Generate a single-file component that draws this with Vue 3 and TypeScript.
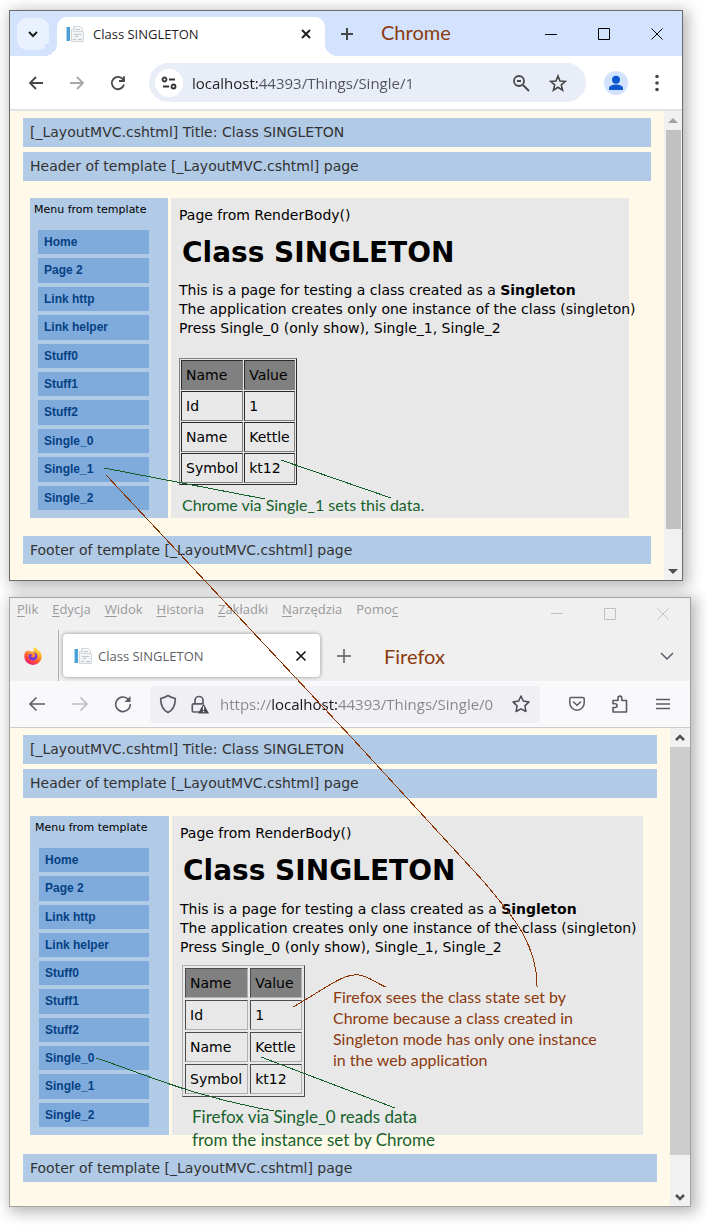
<script setup lang="ts">
import { ref } from 'vue'

interface BrowserWindow {
  kind: 'chrome' | 'firefox'
  note: string[]
}

const windows: BrowserWindow[] = [
  { kind: 'chrome', note: ['Chrome via Single_1 sets this data.'] },
  { kind: 'firefox', note: ['Firefox via Single_0 reads data', 'from the instance set by Chrome'] },
]

const menuLinks: string[] = [
  'Home', 'Page 2', 'Link http', 'Link helper', 'Stuff0',
  'Stuff1', 'Stuff2', 'Single_0', 'Single_1', 'Single_2',
]

const rows: [string, string][] = [
  ['Id', '1'],
  ['Name', 'Kettle'],
  ['Symbol', 'kt12'],
]

// Each entry: text before the access key, the access key, text after it.
const menuBar: [string, string, string][] = [
  ['', 'P', 'lik'], ['', 'E', 'dycja'], ['', 'W', 'idok'], ['', 'H', 'istoria'],
  ['', 'Z', 'akładki'], ['', 'N', 'arzędzia'], ['Pomo', 'c', ''],
]

const chromeUrl = ref('localhost:44393/Things/Single/1')
const firefoxUrl = ref('https://localhost:44393/Things/Single/0')
</script>

<template>
  <main class="board">
    <section v-for="win in windows" :key="win.kind" class="window" :class="win.kind">
      <header v-if="win.kind === 'chrome'">
        <div class="c-tabs">
          <button class="c-search" aria-label="Search tabs">
            <svg width="12" height="12" viewBox="0 0 12 12"><path d="M2 4l4 4 4-4" fill="none" stroke="#1f1f1f" stroke-width="2" /></svg>
          </button>
          <div class="c-tab">
            <svg class="favicon" width="18" height="18" viewBox="0 0 18 18">
              <path d="M7.500 1.500h7l2 2v3h-9z" fill="#f4f6f8" stroke="#d3d9df" />
              <path d="M5.500 4.500h3v-3M7.500 6.500h10v10h-12v-12" fill="#f1f3f5" stroke="#d0d6dc" />
              <path d="M10 4.500h4M8 9.500h7M9 11.500h3M7 14.500h3M12 14.500h4" stroke="#bac4ce" />
              <rect x="1" y="2" width="3" height="14" fill="#4a9fd8" />
              <path d="M.5 2v14" stroke="#a9d2ee" />
            </svg>
            <span>Class SINGLETON</span>
            <button class="icon" aria-label="Close tab">
              <svg width="12" height="12" viewBox="0 0 12 12"><path d="M2 2l8 8M10 2l-8 8" stroke="#1f1f1f" stroke-width="2" /></svg>
            </button>
          </div>
          <button class="icon new-tab" aria-label="New tab">
            <svg width="14" height="14" viewBox="0 0 14 14"><path d="M7 1v12M1 7h12" stroke="#474747" stroke-width="2" /></svg>
          </button>
          <span class="caption">Chrome</span>
          <div class="controls">
            <button class="icon" aria-label="Minimize"><svg width="12" height="12" viewBox="0 0 12 12"><path d="M0 6.500h12" stroke="#000" /></svg></button>
            <button class="icon" aria-label="Maximize"><svg width="12" height="12" viewBox="0 0 12 12"><path d="M.5 .5h11v11H.5z" fill="none" stroke="#000" /></svg></button>
            <button class="icon" aria-label="Close"><svg width="12" height="12" viewBox="0 0 12 12"><path d="M.5 .5l11 11M11.500 .5l-11 11" stroke="#000" /></svg></button>
          </div>
        </div>
        <div class="toolbar c-toolbar">
          <button class="icon" aria-label="Back">
            <svg width="16" height="16" viewBox="0 0 16 16"><path d="M15 8H2M8 2L2 8l6 6" fill="none" stroke="#474747" stroke-width="1.800" /></svg>
          </button>
          <button class="icon" aria-label="Forward">
            <svg width="16" height="16" viewBox="0 0 16 16"><path d="M1 8h13M8 2l6 6-6 6" fill="none" stroke="#a8a8a8" stroke-width="1.800" /></svg>
          </button>
          <button class="icon" aria-label="Reload">
            <svg width="16" height="16" viewBox="0 0 16 16"><path d="M13.200 4.600A6.200 6.200 0 1 0 14 9.600M14 1.200V6H9" fill="none" stroke="#474747" stroke-width="1.800" /></svg>
          </button>
          <div class="address">
            <button class="site" aria-label="Site information">
              <svg width="16" height="14" viewBox="0 0 16 14" fill="none" stroke="#333" stroke-width="1.800"><circle cx="3.500" cy="3.500" r="2" /><path d="M8 3.500h6M2 10.500h6" /><circle cx="12.500" cy="10.500" r="2" /></svg>
            </button>
            <input v-model="chromeUrl" class="url" aria-label="Address" />
            <button class="icon" aria-label="Zoom">
              <svg width="18" height="18" viewBox="0 0 18 18" fill="none" stroke="#474747" stroke-width="1.800"><circle cx="7" cy="7" r="5" /><path d="M11 11l6 6M5 7h4" /></svg>
            </button>
            <button class="icon" aria-label="Bookmark">
              <svg width="18" height="18" viewBox="0 0 18 18"><path d="M9 2l2 5 5.400.4-4.100 3.500 1.300 5.300L9 13.300l-4.600 2.900 1.300-5.300L1.600 7.400 7 7z" fill="none" stroke="#474747" stroke-width="1.600" /></svg>
            </button>
          </div>
          <button class="icon" aria-label="Profile">
            <svg width="24" height="24" viewBox="0 0 24 24"><circle cx="12" cy="12" r="12" fill="#d3e3fd" /><circle cx="12" cy="8.700" r="4" fill="#0b57d0" /><path d="M5 19v-2c0-2 4-3.500 7-3.500s7 1.500 7 3.500v2z" fill="#0b57d0" /></svg>
          </button>
          <button class="icon" aria-label="Menu">
            <svg width="4" height="18" viewBox="0 0 4 18" fill="#474747"><circle cx="2" cy="2.500" r="1.800" /><circle cx="2" cy="9" r="1.800" /><circle cx="2" cy="15.500" r="1.800" /></svg>
          </button>
        </div>
      </header>

      <header v-else>
        <div class="f-menu">
          <nav>
            <button v-for="item in menuBar" :key="item.join('')">{{ item[0] }}<u>{{ item[1] }}</u>{{ item[2] }}</button>
          </nav>
          <div class="controls">
            <button class="icon" aria-label="Minimize"><svg width="12" height="12" viewBox="0 0 12 12"><path d="M0 5.500h12" stroke="#c0c0c0" /></svg></button>
            <button class="icon" aria-label="Maximize"><svg width="12" height="12" viewBox="0 0 12 12"><path d="M.5 .5h11v11H.5z" fill="none" stroke="#c0c0c0" /></svg></button>
            <button class="icon" aria-label="Close"><svg width="12" height="12" viewBox="0 0 12 12"><path d="M.5 .5l11 11M11.500 .5l-11 11" stroke="#c0c0c0" /></svg></button>
          </div>
        </div>
        <div class="f-tabs">
          <button class="logo" aria-label="Firefox View">
            <svg width="18" height="18" viewBox="0 0 18 18">
              <defs>
                <linearGradient id="flame" x1="0.8" y1="0" x2="0.25" y2="1">
                  <stop offset="0" stop-color="#fff44f" /><stop offset=".4" stop-color="#ffa02b" /><stop offset=".7" stop-color="#ff4a3d" /><stop offset="1" stop-color="#e41a72" />
                </linearGradient>
              </defs>
              <path d="M10.500 0c2.200 1 3 2.300 3.500 3.800l1.500.3c1.500 1.500 2.200 3.400 2.200 5.400A8.700 8.400 0 0 1 .3 9.500C.2 7.200 1 5 2.500 3.500l.4 1.300L4.600 3l.7 1.600c2-.6 3.400-.3 4.400.3-.2-1.800 0-3.500.8-4.900z" fill="url(#flame)" />
              <path d="M9 5.200c2.700 0 4.300 1.800 4.300 4.100S11.400 13.500 9 13.500s-4.200-1.700-4.200-3.900c0-1 .4-1.900 1-2.500 1.100 0 1.700.5 2.900.5-.7 1-1.500 1.200-2 1.600.7 1.500 2.800 1.500 4.100.5C12 8.500 10.800 6 9 5.200z" fill="#7139d7" />
            </svg>
          </button>
          <div class="f-tab">
            <svg class="favicon" width="18" height="18" viewBox="0 0 18 18">
              <path d="M7.500 1.500h7l2 2v3h-9z" fill="#f4f6f8" stroke="#d3d9df" />
              <path d="M5.500 4.500h3v-3M7.500 6.500h10v10h-12v-12" fill="#f1f3f5" stroke="#d0d6dc" />
              <path d="M10 4.500h4M8 9.500h7M9 11.500h3M7 14.500h3M12 14.500h4" stroke="#bac4ce" />
              <rect x="1" y="2" width="3" height="14" fill="#4a9fd8" />
              <path d="M.5 2v14" stroke="#a9d2ee" />
            </svg>
            <span>Class SINGLETON</span>
            <button class="icon" aria-label="Close tab">
              <svg width="12" height="12" viewBox="0 0 12 12"><path d="M1.500 1.500l9 9M10.500 1.500l-9 9" stroke="#15141a" stroke-width="1.600" /></svg>
            </button>
          </div>
          <button class="icon new-tab" aria-label="New tab">
            <svg width="14" height="14" viewBox="0 0 14 14"><path d="M7 0v14M0 7h14" stroke="#5b5b66" stroke-width="1.500" /></svg>
          </button>
          <span class="caption">Firefox</span>
          <button class="icon all-tabs" aria-label="List all tabs">
            <svg width="14" height="14" viewBox="0 0 14 14"><path d="M1 4l6 6 6-6" fill="none" stroke="#5b5b66" stroke-width="1.500" /></svg>
          </button>
        </div>
        <div class="toolbar f-toolbar">
          <button class="icon" aria-label="Back">
            <svg width="18" height="16" viewBox="0 0 18 16"><path d="M17 8H2M8.500 1.500L2 8l6.500 6.500" fill="none" stroke="#5b5b66" stroke-width="1.600" /></svg>
          </button>
          <button class="icon" aria-label="Forward">
            <svg width="18" height="16" viewBox="0 0 18 16"><path d="M1 8h15M9.500 1.500L16 8l-6.500 6.500" fill="none" stroke="#bcbcc2" stroke-width="1.600" /></svg>
          </button>
          <button class="icon" aria-label="Reload">
            <svg width="18" height="18" viewBox="0 0 18 18"><path d="M14.500 4.500A7.300 7.300 0 1 0 16.300 9" fill="none" stroke="#5b5b66" stroke-width="1.600" /><path d="M16.500 1v6h-6z" fill="#5b5b66" /></svg>
          </button>
          <div class="address">
            <button class="icon" aria-label="Tracking protection">
              <svg width="18" height="20" viewBox="0 0 18 20"><path d="M9 1.500c2.500 1.700 4.500 2.500 7.300 3C16.300 11 14 16 9 18.500 4 16 1.700 11 1.700 4.500c2.800-.5 4.800-1.300 7.300-3z" fill="none" stroke="#5b5b66" stroke-width="1.700" /></svg>
            </button>
            <button class="icon" aria-label="Connection security">
              <svg width="18" height="19" viewBox="0 0 18 19"><path d="M4 9V5.500a4 4 0 0 1 8 0V9M8 17H2.500A1.200 1.200 0 0 1 1.300 15.800V10A1.200 1.200 0 0 1 2.500 8.800h9" fill="none" stroke="#5b5b66" stroke-width="1.700" /><path d="M12.500 8.500L18 18.500H7z" fill="#4a4a55" /><path d="M12.500 11.500v3.500M12.500 16v1.300" stroke="#fff" stroke-width="1.200" /></svg>
            </button>
            <input v-model="firefoxUrl" class="url" aria-label="Address" />
            <button class="icon" aria-label="Bookmark">
              <svg width="20" height="20" viewBox="0 0 20 20"><path d="M10 2l2.400 5.100 5.600.8-4.100 4 1 5.600-4.900-2.700-4.900 2.700 1-5.600L2 7.900l5.600-.8z" fill="none" stroke="#4a4a55" stroke-width="1.500" stroke-linejoin="round" /></svg>
            </button>
          </div>
          <button class="icon" aria-label="Pocket">
            <svg width="16" height="16" viewBox="0 0 16 16"><path d="M2 1.500h12q1.200 0 1.200 1.200V7a7.200 7.200 0 0 1-14.400 0V2.700Q.8 1.500 2 1.500zM4.500 6L8 9.300 11.500 6" fill="none" stroke="#5b5b66" stroke-width="1.500" stroke-linecap="round" /></svg>
          </button>
          <button class="icon" aria-label="Extensions">
            <svg width="18" height="18" viewBox="0 0 18 18"><path d="M2 17h13.500V5.500H10.800V3A1.900 1.900 0 0 0 7 3v2.500H2v3.200h2.200a1.900 1.900 0 0 1 0 3.800H2z" fill="none" stroke="#5b5b66" stroke-width="1.600" stroke-linejoin="round" /></svg>
          </button>
          <button class="icon" aria-label="Menu">
            <svg width="14" height="12" viewBox="0 0 14 12"><path d="M0 1.500h14M0 6h14M0 10.500h14" stroke="#5b5b66" stroke-width="1.400" /></svg>
          </button>
        </div>
      </header>

      <div class="viewport">
        <div class="page">
          <p class="bar">[_LayoutMVC.cshtml] Title: Class SINGLETON</p>
          <p class="bar">Header of template [_LayoutMVC.cshtml] page</p>
          <div class="columns">
            <nav class="menu">
              <p>Menu from template</p>
              <ul>
                <li v-for="link in menuLinks" :key="link"><a href="#">{{ link }}</a></li>
              </ul>
            </nav>
            <article class="body">
              <p>Page from RenderBody()</p>
              <h1>Class SINGLETON</h1>
              <p class="intro">
                This is a page for testing a class created as a <b>Singleton</b><br />
                The application creates only one instance of the class (singleton)<br />
                Press Single_0 (only show), Single_1, Single_2
              </p>
              <table>
                <thead>
                  <tr><th>Name</th><th>Value</th></tr>
                </thead>
                <tbody>
                  <tr v-for="row in rows" :key="row[0]"><td>{{ row[0] }}</td><td>{{ row[1] }}</td></tr>
                </tbody>
              </table>
              <p class="note green"><template v-for="line in win.note" :key="line">{{ line }}<br /></template></p>
              <p v-if="win.kind === 'firefox'" class="note brown">
                Firefox sees the class state set by<br />Chrome because a class created in<br />Singleton mode has only one instance<br />in the web application
              </p>
            </article>
          </div>
          <p class="bar">Footer of template [_LayoutMVC.cshtml] page</p>
        </div>
        <div class="scroll" aria-hidden="true">
          <svg class="arrow" width="10" height="10" viewBox="0 0 10 10">
            <path v-if="win.kind === 'chrome'" d="M0 7l5-5 5 5z" fill="#a3a3a3" />
            <path v-else d="M1 7l4-4 4 4" fill="none" stroke="#505050" stroke-width="2.500" />
          </svg>
          <div class="thumb"></div>
          <div class="track"></div>
          <svg class="arrow" width="10" height="10" viewBox="0 0 10 10">
            <path v-if="win.kind === 'chrome'" d="M0 3l5 5 5-5z" fill="#505050" />
            <path v-else d="M1 3l4 4 4-4" fill="none" stroke="#505050" stroke-width="2.500" />
          </svg>
        </div>
      </div>
    </section>

    <svg class="lines" width="707" height="1225" viewBox="0 0 707 1225" fill="none" shape-rendering="crispEdges" aria-hidden="true">
      <g stroke="#0f5f26">
        <path d="M104 468L265 499M281 460L391 498" />
        <path d="M96 1058C145 1074 190 1096 274 1111M261 1057L395 1108" />
      </g>
      <g stroke="#8a3200">
        <path d="M106 475L352 738L484 882C505 908 538 940 537 988" />
        <path d="M293 1007C325 989 343 973 359 975C369 976 377 984 386 987" />
      </g>
    </svg>
  </main>
</template>

<style>
body {
  margin: 0;
  background: #fff;
}
</style>

<style scoped>
.board {
  position: relative;
  overflow: hidden;
  padding: 10px 16px 18px 9px;
  font-family: "DejaVu Sans", Verdana, sans-serif;
  font-size: 14px;
  color: #000;
}
p, h1, ul { margin: 0; padding: 0; }
button {
  border: 0;
  padding: 0;
  background: none;
  color: inherit;
  font: inherit;
}
svg { display: block; flex: none; }
.window {
  border: 1px solid #6b6b6b;
  background: #fff;
  box-shadow: 3px 3px 14px 2px rgba(0, 0, 0, 0.3);
}
.chrome { margin: 0 8px 16px 0; }
.firefox { border-color: #a3a3a3; background: #f0f0f0; }
.icon {
  display: flex;
  flex: none;
  align-items: center;
  justify-content: center;
  width: 32px;
  height: 32px;
}
.controls { display: flex; margin-left: auto; gap: 21px; }
.caption {
  font: 20px/28px Lato, Carlito, sans-serif;
  color: #8b3a0e;
}
.toolbar { display: flex; align-items: center; box-sizing: border-box; }
.address { display: flex; flex: 1; align-items: center; min-width: 0; }
.url {
  flex: 1;
  min-width: 0;
  border: 0;
  padding: 0;
  outline: 0;
  font: 15px/22px "Open Sans", "Noto Sans", sans-serif;
  color: transparent;
  background-clip: text;
  -webkit-background-clip: text;
}

/* Chrome frame */
.c-tabs {
  display: flex;
  align-items: center;
  height: 45px;
  padding: 0 9px 0 7px;
  background: #d3e3fd;
}
.c-tabs .caption { padding-bottom: 4px; }
.c-search {
  display: flex;
  align-items: center;
  justify-content: center;
  width: 32px;
  height: 32px;
  border-radius: 10px;
  background: #eaf1fe;
}
.c-tab {
  position: relative;
  display: flex;
  align-self: flex-end;
  align-items: center;
  box-sizing: border-box;
  width: 268px;
  height: 39px;
  margin-left: 8px;
  padding: 0 3px 6px 9px;
  border-radius: 10px 10px 0 0;
  background: #fff;
  font: 13px/20px "Open Sans", "Noto Sans", sans-serif;
  color: #1f1f1f;
}
.c-tab::before,
.c-tab::after {
  content: "";
  position: absolute;
  bottom: 0;
  width: 12px;
  height: 12px;
}
.c-tab::before { right: 100%; background: radial-gradient(circle at 0 0, #d3e3fd 12px, #fff 12px); }
.c-tab::after { left: 100%; background: radial-gradient(circle at 100% 0, #d3e3fd 12px, #fff 12px); }
.favicon { margin-right: 9px; }
.c-tab .icon,
.f-tab .icon { margin-left: auto; }
.c-tabs .new-tab { margin: 0 18px 0 6px; }
.c-toolbar {
  gap: 9px;
  height: 55px;
  padding: 0 9px 0 10px;
  border-bottom: 2px solid #dfe3e6;
}
.c-toolbar .address {
  height: 39px;
  margin: 0 5px 0 6px;
  padding: 0 12px 0 6px;
  border-radius: 20px;
  background: #e9edf7;
  gap: 5px;
}
.site {
  display: flex;
  align-items: center;
  justify-content: center;
  width: 28px;
  height: 28px;
  margin-right: 4px;
  border-radius: 50%;
  background: #fff;
}
.c-toolbar .url { background-image: linear-gradient(90deg, #1f1f1f 66px, #4f5358 66px); }

/* Firefox frame */
.f-menu {
  display: flex;
  align-items: center;
  height: 32px;
  padding: 0 11px 0 7px;
}
.f-menu nav { display: flex; gap: 14px; padding-bottom: 10px; }
.f-menu nav button {
  font: 13px/20px "Open Sans", "Noto Sans", sans-serif;
  color: #9a9a9a;
}
.f-menu u { text-underline-offset: 2px; }
.f-tabs { display: flex; align-items: stretch; height: 51px; padding-right: 7px; }
.logo {
  display: flex;
  align-items: center;
  justify-content: center;
  width: 49px;
  padding-right: 2px;
  border-right: 1px solid #b0b0b0;
}
.f-tab {
  display: flex;
  align-items: center;
  box-sizing: border-box;
  width: 257px;
  margin: 4px 0 4px 4px;
  padding: 0 3px 0 11px;
  border-radius: 4px;
  background: #fff;
  box-shadow: 0 0 4px rgba(0, 0, 0, 0.4);
  font: 13px/20px "Open Sans", "Noto Sans", sans-serif;
  color: #5f5f68;
}
.f-tab .favicon { margin-right: 6px; }
.f-tabs > .icon,
.f-tabs > .caption { align-self: center; }
.f-tabs .new-tab { margin: 0 24px 0 8px; }
.all-tabs { margin-left: auto; }
.f-toolbar {
  gap: 11px;
  height: 47px;
  padding: 0 11px 0 11px;
  border-bottom: 1px solid #ccc;
  background: #f9f9fb;
}
.f-toolbar .address {
  height: 37px;
  margin-right: 10px;
  padding: 0 3px 0 2px;
  border-radius: 4px;
  background: #f0f0f4;
}
.f-toolbar .url {
  margin-left: 4px;
  background-image: linear-gradient(90deg, #85858d 52px, #15141a 52px, #15141a 118px, #85858d 118px);
}

/* Served page */
.viewport { display: flex; background: #fff9e9; }
.page { flex: 1; min-width: 0; padding: 7px 13px 16px; }
.bar {
  margin-bottom: 5px;
  padding: 0 7px;
  line-height: 29px;
  background: #b1cae6;
  color: #333;
}
.bar:last-child { margin: 0; line-height: 28px; }
.columns { display: flex; gap: 3px; margin: 17px 22px 18px 7px; min-height: 320px; }
.menu {
  display: flex;
  flex: none;
  flex-direction: column;
  box-sizing: border-box;
  width: 138px;
  padding: 0 19px 8px 8px;
  background: #b1cae6;
}
.menu p {
  margin: 0 -16px 8px -4px;
  font-size: 11px;
  line-height: 24px;
  white-space: nowrap;
}
.menu ul {
  display: flex;
  flex: 1;
  flex-direction: column;
  gap: 4px;
  list-style: none;
}
.menu li { display: flex; flex: 1; }
.menu a {
  flex: 1;
  padding-left: 6px;
  background: #7eabdc;
  color: #064183;
  font: bold 12px/24px "Liberation Sans", Arial, sans-serif;
  text-decoration: none;
}
.body {
  position: relative;
  flex: 1;
  box-sizing: border-box;
  min-width: 0;
  padding: 8px 0 0 8px;
  background: #e8e8e8;
  line-height: 19px;
  white-space: nowrap;
}
h1 {
  margin: 10px 0 10px 3px;
  font-size: 28px;
  line-height: 36px;
}
table {
  margin-top: 20px;
  border: 1px solid;
  border-color: #808080 #2b2b2b #2b2b2b #808080;
  border-spacing: 1px;
}
th, td {
  height: 28px;
  padding: 0 4px 0 5px;
  border: 1px solid;
  border-color: #2b2b2b #808080 #808080 #2b2b2b;
  font-weight: normal;
  text-align: left;
}
th { background: #808080; }
.note { position: absolute; font-family: Lato, Carlito, sans-serif; }
.green { color: #17622d; }
.brown { color: #8b3a0e; }
.chrome .green { top: 297px; left: 11px; font-size: 16px; }
.firefox .green { top: 289px; left: 20px; font-size: 17px; line-height: 23px; }
.firefox .brown { top: 170px; left: 161px; font-size: 16px; line-height: 21px; }
.chrome th,
.chrome td { padding: 0 4px; }

.firefox .columns { margin: 18px 14px 19px 7px; min-height: 319px; }
.firefox .page { padding-bottom: 24px; }
.firefox .menu { width: 139px; padding: 0 20px 8px 9px; }
.firefox h1 { margin-bottom: 11px; }
.firefox table {
  margin: 8px 0 0 2px;
  border-color: #b0b0b0 #4a4a4a #4a4a4a #b0b0b0;
  border-spacing: 2px;
}
.firefox th,
.firefox td { border-color: #4a4a4a #b0b0b0 #b0b0b0 #4a4a4a; padding: 0 5px 0 4px; }

.scroll {
  display: flex;
  flex: none;
  flex-direction: column;
  align-items: center;
  width: 18px;
  background: #f1f1f1;
}
.arrow { margin: 5px 0 4px; }
.thumb { flex: 1; width: 15px; background: #c1c1c1; }
.track { height: 32px; }
.firefox .scroll { width: 20px; }
.firefox .thumb { width: 100%; background: #cdcdcd; }
.lines { position: absolute; top: 0; left: 0; pointer-events: none; }
</style>
